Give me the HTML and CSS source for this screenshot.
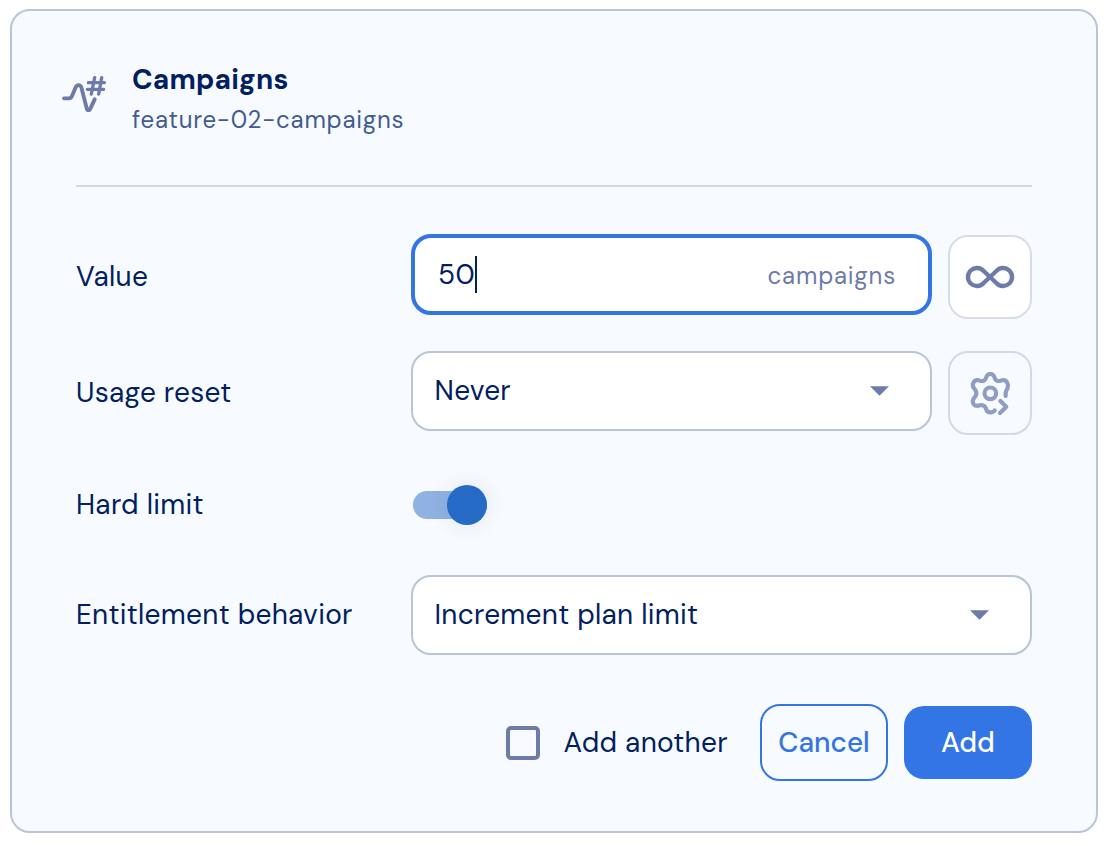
FILE: index.html
```
<!DOCTYPE html>
<html lang="en">
<head>
    <meta charset="UTF-8">
    <meta name="viewport" content="width=device-width, initial-scale=1.0">
    <title>Campaigns</title>
    <link rel="stylesheet" href="styles.css">
</head>
<body>
    <div class="card">
        <div class="header">
            <svg class="featureIcon" viewBox="36 48 132 108">
                <path d="M42 115H57C62 115 64 113 66 108L77 82C81 73 91 73 94 82L110 145C112 153 118 153 121 146L134 118" stroke-width="11.5"/>
                <path d="M115 68H163M112 88H161M134 53L124 102M155 53L146 102" stroke-width="10"/>
            </svg>
            <div class="titles">
                <div class="title">Campaigns</div>
                <div class="subtitle">feature-02-campaigns</div>
            </div>
        </div>

        <div class="row rowValue">
            <div class="label">Value</div>
            <div class="input">
                <span class="number">50</span><span class="caret"></span>
                <span class="unit">campaigns</span>
            </div>
            <div class="iconBtn white">
                <svg class="infinity" viewBox="75 120 150 72">
                    <path d="M150 156L131 138A27 27 0 1 0 131 174L169 138A27 27 0 1 1 169 174Z" stroke-width="13"/>
                </svg>
            </div>
        </div>

        <div class="row rowReset">
            <div class="label">Usage reset</div>
            <div class="select">
                <span>Never</span>
                <svg class="arrow" viewBox="0 0 20 10"><path d="M0 0H20L10 10Z"/></svg>
            </div>
            <div class="iconBtn">
                <svg class="gear" viewBox="90 78 123 135">
                    <path d="M197 153C197 146 196 142 199 137C205 127 206 120 201 112C197 105 190 104 182 107C173 110 166 106 164 99C162 90 159 87 151 87C143 87 140 90 138 99C136 106 129 110 120 107C112 104 105 105 101 112C96 120 98 126 104 132C110 140 110 150 104 157C98 163 96 170 101 178C105 185 112 183 120 181C129 179 136 184 138 191C140 199 143 202 151 202C158 202 162 200 164 196"/>
                    <path d="M181 168L199 185L180 204"/>
                    <circle cx="151" cy="145" r="17.5"/>
                </svg>
            </div>
        </div>

        <div class="row rowLimit">
            <div class="label">Hard limit</div>
            <div class="switch"><div class="knob"></div></div>
        </div>

        <div class="row rowBehavior">
            <div class="label">Entitlement behavior</div>
            <div class="select">
                <span>Increment plan limit</span>
                <svg class="arrow" viewBox="0 0 20 10"><path d="M0 0H20L10 10Z"/></svg>
            </div>
        </div>

        <div class="footer">
            <div class="checkbox"></div>
            <div class="another">Add another</div>
            <div class="btn cancel">Cancel</div>
            <div class="btn add">Add</div>
        </div>
    </div>
</body>
</html>
```
FILE: styles.css
```
body{
    margin: 0;
    padding: 9px 6px 0 10px;
    background: #fff;
    color: #00205f;
    font-family: "DM Sans", Inter, "Liberation Sans", sans-serif;
    font-size: 28px;
    line-height: 36px;
    letter-spacing: 0.3px;
    white-space: nowrap;
}
div{
    box-sizing: border-box;
}
svg{
    display: block;
    fill: none;
    stroke: #6d7ba8;
    stroke-linecap: round;
    stroke-linejoin: round;
}
.card{
    height: 824px;
    border: 2px solid #bcc3d8;
    border-radius: 20px;
    padding: 0 64px;
    background: #f7fbff;
}
.header{
    display: flex;
    height: 176px;
    padding-top: 51px;
    border-bottom: 2px solid #d2d8e4;
}
.featureIcon{
    width: 44px;
    height: 36px;
    margin: 14px 26px 0 -14px;
}
.title{
    font-weight: 700;
    letter-spacing: 0.2px;
}
.subtitle{
    margin-top: 4px;
    color: #425c92;
    font-size: 24px;
    letter-spacing: 0.8px;
}
.row{
    display: flex;
}
.label{
    width: 335px;
    flex: none;
    display: flex;
    align-items: center;
}
.rowValue{
    margin-top: 47px;
    height: 85px;
}
.rowReset{
    margin-top: 32px;
    height: 84px;
}
.rowLimit{
    margin-top: 50px;
    height: 40px;
}
.rowBehavior{
    margin-top: 50px;
    height: 80px;
}
.input, .select{
    flex: 1;
    display: flex;
    align-items: center;
    background: #fff;
    border-radius: 20px;
}
.input{
    height: 81px;
    padding: 0 32px 0 23px;
    border: 4px solid #3375e4;
}
.caret{
    width: 2px;
    height: 37px;
    background: #00205f;
}
.unit{
    margin-left: auto;
    padding-top: 2px;
    color: #6d7ba8;
    font-size: 24px;
    letter-spacing: 0.8px;
}
.select{
    height: 80px;
    padding: 0 41px 0 21.5px;
    justify-content: space-between;
    border: 2px solid #bcc3d8;
}
.arrow{
    width: 19px;
    height: 10px;
    fill: #6d7ba8;
    stroke: none;
}
.iconBtn{
    width: 84px;
    height: 84px;
    margin-left: 16px;
    display: flex;
    align-items: center;
    justify-content: center;
    border: 2px solid #d2d9e7;
    border-radius: 20px;
}
.iconBtn.white{
    margin-top: 1px;
    border-color: #d9dce7;
    background: #fff;
}
.infinity{
    width: 50px;
    height: 24px;
}
.gear{
    width: 41px;
    height: 45px;
    margin-top: 1px;
    stroke: #909dc2;
    stroke-width: 12.5;
}
.switch{
    width: 74px;
    height: 28px;
    margin: 6px 0 0 2px;
    display: flex;
    align-items: center;
    justify-content: flex-end;
    border-radius: 14px;
    background: #8fb2e2;
}
.knob{
    width: 40px;
    height: 40px;
    flex: none;
    border-radius: 50%;
    background: #256bc6;
    box-shadow: 0 0 20px rgba(50, 70, 120, .12);
}
.footer{
    display: flex;
    align-items: center;
    justify-content: flex-end;
    height: 77px;
    margin-top: 49px;
}
.checkbox{
    width: 34px;
    height: 34px;
    margin: 1px 23.5px 0 0;
    border: 4px solid #6d7ba8;
    border-radius: 5px;
}
.another{
    width: 180.5px;
}
.btn{
    width: 128px;
    display: flex;
    align-items: center;
    justify-content: center;
    border-radius: 20px;
    font-weight: 500;
    letter-spacing: 0;
}
.cancel{
    height: 77px;
    margin-left: 16px;
    border: 2px solid #3375e4;
    color: #3375e4;
}
.add{
    height: 73px;
    margin-left: 16px;
    background: #3375e4;
    color: #fff;
}
```
